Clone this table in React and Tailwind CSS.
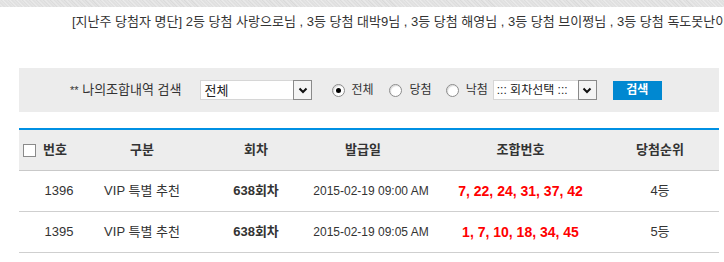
import React from 'react';

const font = { fontFamily: '"Liberation Sans", "Noto Sans CJK KR", sans-serif' };

function Chevron() {
  return (
    <svg width="10" height="7" viewBox="0 0 10 7">
      <polyline points="1.5,1.5 5,5 8.5,1.5" fill="none" stroke="#111" strokeWidth="2" />
    </svg>
  );
}

function SelectBox({ label, width, size }) {
  return (
    <div className={`flex items-center h-[20px] border border-[#d6d6d6] bg-white ${width}`}>
      <span className={`flex-1 pl-[3px] leading-none text-[#222] whitespace-nowrap overflow-hidden ${size}`}>{label}</span>
      <span className="flex items-center justify-center w-[19px] h-[20px] -my-px -mr-px border border-[#8a8a8a] bg-[#f4f4f4]">
        <Chevron />
      </span>
    </div>
  );
}

function Radio({ checked }) {
  return (
    <span className="flex items-center justify-center w-[13px] h-[13px] rounded-full border border-[#8c8c8c] bg-white shadow-[inset_1px_1px_1px_rgba(0,0,0,0.15)]">
      {checked && <span className="w-[5px] h-[5px] rounded-full bg-black" />}
    </span>
  );
}

const rows = [
  { no: '1396', kind: 'VIP 특별 추천', round: '638회차', date: '2015-02-19 09:00 AM', nums: '7, 22, 24, 31, 37, 42', rank: '4등' },
  { no: '1395', kind: 'VIP 특별 추천', round: '638회차', date: '2015-02-19 09:05 AM', nums: '1, 7, 10, 18, 34, 45', rank: '5등' },
];

const cols = 'grid grid-cols-[74px_98px_130px_100px_199px_80px_1fr]';

export default function App() {
  return (
    <div className="w-[724px] h-[262px] bg-white overflow-hidden text-[#333]" style={font}>
      {/* textured strip */}
      <div className="h-[7px] bg-[repeating-linear-gradient(45deg,#d9d9d9_0px,#ebebeb_2px,#dedede_3px,#e6e6e6_5px)]" />

      {/* winners notice, clipped at the right edge like the original */}
      <div className="mt-[7px] pl-[72px] text-[13px] leading-4 whitespace-nowrap overflow-hidden text-[#333]">
        [지난주 당첨자 명단] 2등 당첨 사랑으로님 , 3등 당첨 대박9님 , 3등 당첨 해영님 , 3등 당첨 브이쩡님 , 3등 당첨 독도못난이님
      </div>

      {/* search bar */}
      <div className="mt-[38px] ml-[19px] w-[700px] h-[44px] bg-[#ececec] flex items-center pl-[51px] text-[13px] text-[#333]">
        <span className="whitespace-nowrap"><span className="text-[11px]">**</span> 나의조합내역 검색</span>
        <div className="ml-[19px]">
          <SelectBox label="전체" width="w-[112px]" size="text-[13px]" />
        </div>
        <div className="ml-[20px] flex items-center text-[12px]">
          <Radio checked />
          <span className="ml-[6px]">전체</span>
        </div>
        <div className="ml-[15px] flex items-center text-[12px]">
          <Radio />
          <span className="ml-[8px]">당첨</span>
        </div>
        <div className="ml-[14px] flex items-center text-[12px]">
          <Radio />
          <span className="ml-[7px]">낙첨</span>
        </div>
        <div className="ml-[5px]">
          <SelectBox label="::: 회차선택 :::" width="w-[104px]" size="text-[12px]" />
        </div>
        <button className="ml-[16px] w-[49px] h-[19px] bg-[#0088d1] text-white text-[12px] font-bold leading-none">
          검색
        </button>
      </div>

      {/* result table */}
      <div className="mt-[16px] ml-[19px] w-[700px] border-t-2 border-[#0090e3]">
        <div className={`${cols} h-[41px] items-center bg-[#ededed] border-b border-[#c9c9c9] text-[13px] font-bold text-[#333]`}>
          <div className="flex items-center pl-[4px]">
            <span className="w-[13px] h-[13px] border border-[#8a8a8a] bg-white" />
            <span className="ml-[7px]">번호</span>
          </div>
          <div className="text-center">구분</div>
          <div className="text-center">회차</div>
          <div className="text-center pr-[16px]">발급일</div>
          <div className="text-center">조합번호</div>
          <div className="text-center">당첨순위</div>
          <div />
        </div>
        {rows.map((r) => (
          <div key={r.no} className={`${cols} h-[41px] items-center border-b border-[#cfcfcf] text-[13px] text-[#333]`}>
            <div className="flex justify-center pl-[6px]">{r.no}</div>
            <div className="flex justify-center whitespace-nowrap">{r.kind}</div>
            <div className="flex justify-center font-bold">{r.round}</div>
            <div className="flex justify-center whitespace-nowrap text-[12px]">{r.date}</div>
            <div className="flex justify-center font-bold text-[14px] text-[#ff0000] whitespace-nowrap">{r.nums}</div>
            <div className="flex justify-center">{r.rank}</div>
            <div />
          </div>
        ))}
      </div>
    </div>
  );
}
